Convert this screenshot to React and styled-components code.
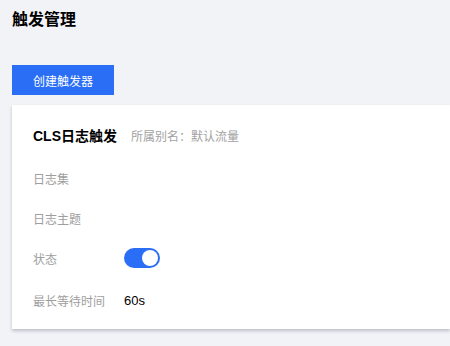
import styled, { createGlobalStyle } from "styled-components";

const GlobalStyle = createGlobalStyle`
  html, body {
    margin: 0;
    padding: 0;
    background: #f2f3f7;
    overflow: hidden;
  }
  body {
    font-family: "Helvetica Neue", Arial, "Liberation Sans", "Noto Sans CJK SC", sans-serif;
  }
`;

const Page = styled.main`
  width: 450px;
  height: 346px;
  padding: 0 0 0 12px;
  box-sizing: border-box;
  display: flex;
  flex-direction: column;
  align-items: flex-start;
`;

const PageTitle = styled.h1`
  margin: 8px 0 0;
  font-size: 16px;
  line-height: 24px;
  font-weight: 700;
  color: #000;
`;

const PrimaryButton = styled.button`
  margin-top: 33px;
  width: 102px;
  height: 30px;
  border: none;
  background: #2a6ef6;
  color: #fff;
  font-family: inherit;
  font-size: 12px;
  padding: 0;
  cursor: pointer;
`;

const Card = styled.section`
  margin-top: 10px;
  width: 438px;
  flex-shrink: 0;
  background: #fff;
  box-shadow: 0 2px 3px rgba(40, 45, 70, 0.25);
  padding: 20px 21px 11px;
  box-sizing: border-box;
`;

const CardHeader = styled.div`
  display: flex;
  align-items: baseline;
  gap: 14px;
  height: 20px;
  margin-bottom: 13px;
`;

const CardTitle = styled.h2`
  margin: 0;
  font-size: 14px;
  font-weight: 700;
  color: #000;
`;

const CardMeta = styled.span`
  font-size: 12px;
  color: #a2a2a2;
`;

const FieldRow = styled.div`
  display: flex;
  align-items: center;
  height: 40px;
  padding-top: ${p => (p.last ? "4px" : "0")};
  box-sizing: border-box;
`;

const FieldLabel = styled.span`
  width: 91px;
  font-size: 12px;
  color: #9e9e9e;
`;

const FieldValue = styled.span`
  font-size: 13px;
  color: #000;
`;

const Switch = styled.span`
  position: relative;
  display: inline-block;
  width: 36px;
  height: 20px;
  border-radius: 10px;
  background: ${p => (p.on ? "#2a6ef6" : "#ccc")};

  &::after {
    content: "";
    position: absolute;
    top: 2px;
    left: ${p => (p.on ? "18px" : "2px")};
    width: 16px;
    height: 16px;
    border-radius: 50%;
    background: #fff;
  }
`;

const fields = [
  { label: "日志集" },
  { label: "日志主题" },
  { label: "状态", toggle: true },
  { label: "最长等待时间", value: "60s" },
];

const App = () => {
  return (
    <>
      <GlobalStyle />
      <Page>
        <PageTitle>触发管理</PageTitle>
        <PrimaryButton>创建触发器</PrimaryButton>
        <Card>
          <CardHeader>
            <CardTitle>CLS日志触发</CardTitle>
            <CardMeta>所属别名：默认流量</CardMeta>
          </CardHeader>
          {fields.map((f, i) => (
            <FieldRow key={f.label} last={i === fields.length - 1}>
              <FieldLabel>{f.label}</FieldLabel>
              {f.toggle ? <Switch on /> : f.value && <FieldValue>{f.value}</FieldValue>}
            </FieldRow>
          ))}
        </Card>
      </Page>
    </>
  );
};

export default App;
